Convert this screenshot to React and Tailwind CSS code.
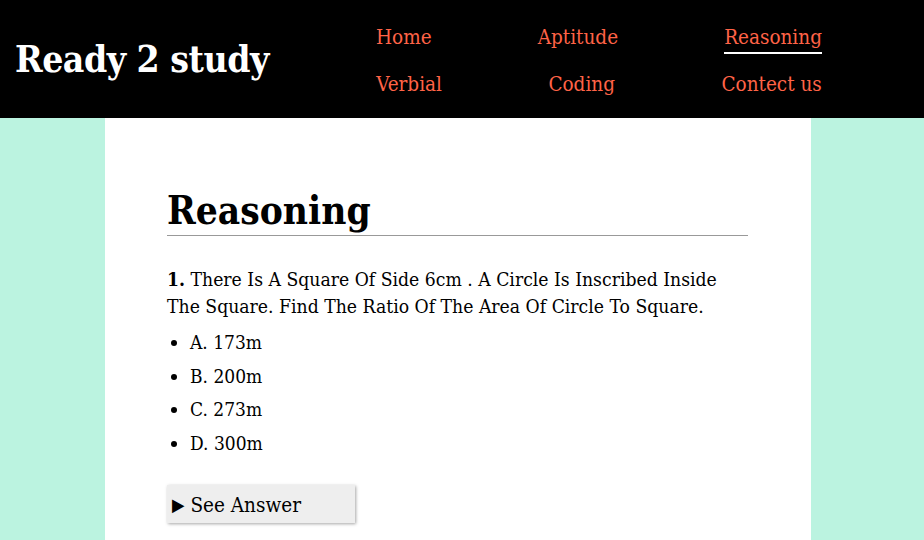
import React from 'react';

const slab = { fontFamily: '"DejaVu Serif Condensed", "DejaVu Serif", serif' };

const row1 = ['Home', 'Aptitude', 'Reasoning'];
const row2 = ['Verbial', 'Coding', 'Contect us'];
const options = ['A. 173m', 'B. 200m', 'C. 273m', 'D. 300m'];

function NavRow({ items, active }) {
  return (
    <div className="flex justify-around">
      {items.map((it) => (
        <a
          key={it}
          href="#"
          className={`text-[20.5px] leading-[24px] pb-[3px] text-[#ff6347] border-b-2 ${it === active ? 'border-white' : 'border-transparent'}`}
        >
          {it}
        </a>
      ))}
    </div>
  );
}

export default function App() {
  return (
    <div className="min-h-[540px] bg-[#bbf3e0]" style={slab}>
      <header className="h-[118px] bg-black flex items-center">
        <h1 className="pl-[15px] w-[323px] text-[37px] text-white font-bold tracking-[-0.5px] leading-none">Ready 2 study</h1>
        <nav className="w-[552px] flex flex-col gap-[18px] pt-[7px]">
          <NavRow items={row1} active="Reasoning" />
          <NavRow items={row2} />
        </nav>
      </header>

      <main className="ml-[105px] w-[706px] bg-white pl-[62px] pr-[63px] pt-[71px] pb-[20px] min-h-[422px]">
        <h2 className="text-[38.5px] font-bold leading-[44px] text-black border-b border-[#999] pb-[2px]">Reasoning</h2>

        <p className="mt-[30px] text-[19.2px] leading-[27px] text-black">
          <b>1.</b> There Is A Square Of Side 6cm . A Circle Is Inscribed Inside The Square. Find The Ratio Of The Area Of Circle To Square.
        </p>

        <ul className="list-disc pl-[23px] mt-[6px] text-[19px] leading-[33.5px] text-black">
          {options.map((o) => (
            <li key={o}>{o}</li>
          ))}
        </ul>

        <div className="mt-[25px] w-[188px] h-[38px] bg-[#eeeeee] shadow-[1px_1px_3px_rgba(0,0,0,0.35)] flex items-center px-[5px] pt-[2px] gap-[6px] text-[20.5px] text-black">
          <span className="text-[18px] leading-none">▶</span>
          <span>See Answer</span>
        </div>
      </main>
    </div>
  );
}
